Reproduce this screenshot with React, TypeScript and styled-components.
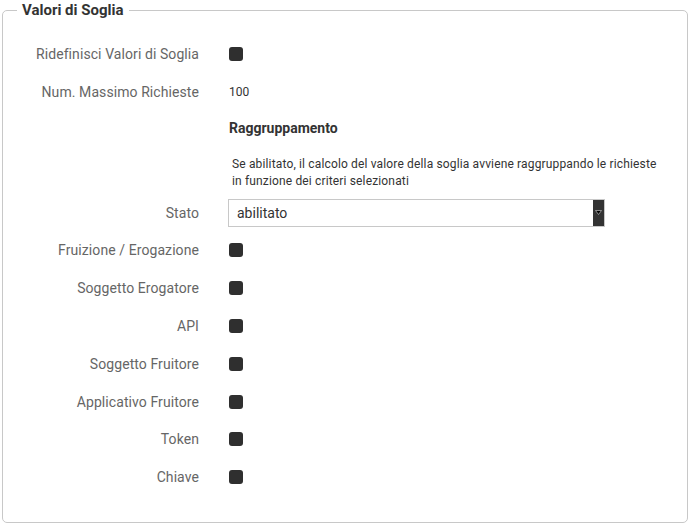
import React from "react";
import styled, { createGlobalStyle } from "styled-components";

const Global = createGlobalStyle`
  html, body { margin: 0; padding: 0; background: #fff; }
  body { font-family: Roboto, "Liberation Sans", Arial, sans-serif; }
`;

const Page = styled.div`
  width: 690px;
  height: 523px;
  padding: 0 2px;
  box-sizing: border-box;
`;

const Fieldset = styled.fieldset`
  margin: 0;
  padding: 15px 0 26px 0;
  border: 1px solid #c8c8c8;
  border-radius: 5px;
  min-width: 0;
`;

const Legend = styled.legend`
  margin-left: 14px;
  padding: 0 5px;
  font-size: 15px;
  line-height: 20px;
  font-weight: 700;
  color: #333;
`;

const Row = styled.div<{ $h?: number }>`
  display: grid;
  grid-template-columns: 196px 1fr;
  column-gap: 30px;
  align-items: center;
  height: ${(p) => p.$h ?? 38}px;
`;

const Label = styled.div`
  text-align: right;
  font-size: 14px;
  letter-spacing: 0.08px;
  color: #666;
  white-space: nowrap;
`;

const Value = styled.div<{ $bold?: boolean; $size?: number }>`
  font-size: ${(p) => p.$size ?? 12}px;
  font-weight: ${(p) => (p.$bold ? 700 : 400)};
  color: #333;
`;

const Desc = styled.div`
  padding: 11px 0 4px 229px;
  font-size: 12px;
  letter-spacing: 0.15px;
  line-height: 17px;
  color: #333;
`;

const Check = styled.span`
  display: block;
  width: 14px;
  height: 14px;
  border-radius: 3px;
  background: #2f2f2f;
`;

const Select = styled.div`
  display: flex;
  align-items: stretch;
  width: 377px;
  height: 28px;
  box-sizing: border-box;
  border: 1px solid #c8c8c8;
  margin-left: -1px;
`;

const SelectText = styled.div`
  flex: 1;
  padding-left: 8px;
  font-size: 14px;
  line-height: 27px;
  color: #333;
`;

const SelectBtn = styled.div`
  width: 11px;
  background: #333;
  display: flex;
  align-items: center;
  justify-content: center;
`;

const checks = [
  "Fruizione / Erogazione",
  "Soggetto Erogatore",
  "API",
  "Soggetto Fruitore",
  "Applicativo Fruitore",
  "Token",
  "Chiave",
];

export default function App() {
  return (
    <>
      <Global />
      <Page>
        <Fieldset>
          <Legend>Valori di Soglia</Legend>
          <Row>
            <Label>Ridefinisci Valori di Soglia</Label>
            <Check />
          </Row>
          <Row>
            <Label>Num. Massimo Richieste</Label>
            <Value>100</Value>
          </Row>
          <Row $h={34}>
            <div />
            <Value $bold $size={14}>Raggruppamento</Value>
          </Row>
          <Desc>
            Se abilitato, il calcolo del valore della soglia avviene raggruppando le richieste
            <br />
            in funzione dei criteri selezionati
          </Desc>
          <Row $h={37}>
            <Label>Stato</Label>
            <Select>
              <SelectText>abilitato</SelectText>
              <SelectBtn>
                <svg width="7" height="5" viewBox="0 0 7 5">
                  <path d="M0.5 0.5 H6.5 L3.5 4.5 Z" fill="#000" stroke="#bbb" strokeWidth="0.7" />
                </svg>
              </SelectBtn>
            </Select>
          </Row>
          {checks.map((c) => (
            <Row key={c} $h={37.9}>
              <Label>{c}</Label>
              <Check />
            </Row>
          ))}
        </Fieldset>
      </Page>
    </>
  );
}
